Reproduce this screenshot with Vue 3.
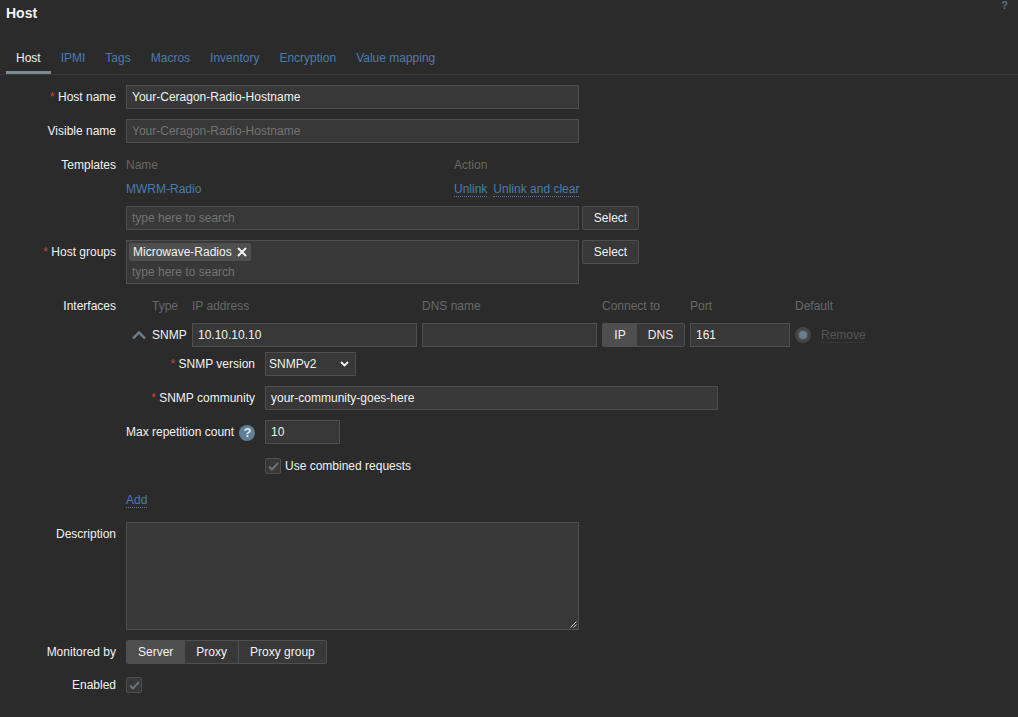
<script setup>
const tabs = ['Host', 'IPMI', 'Tags', 'Macros', 'Inventory', 'Encryption', 'Value mapping']
</script>

<template>
  <div class="page">
    <header class="head">
      <h1>Host</h1>
      <span class="help">?</span>
    </header>

    <nav class="tabs">
      <a v-for="(tab, i) in tabs" :key="tab" class="tab" :class="{ active: i === 0 }">{{ tab }}</a>
    </nav>

    <form class="form" @submit.prevent>
      <div class="row">
        <label class="lbl"><i>*</i> Host name</label>
        <div class="input wide">Your-Ceragon-Radio-Hostname</div>
      </div>

      <div class="row">
        <label class="lbl">Visible name</label>
        <div class="input wide muted">Your-Ceragon-Radio-Hostname</div>
      </div>

      <div class="row">
        <label class="lbl lbl-top">Templates</label>
        <div>
          <div class="tpl-line head-cell">
            <span>Name</span>
            <span>Action</span>
          </div>
          <div class="tpl-line">
            <a class="link">MWRM-Radio</a>
            <span class="actions">
              <a class="link dotted">Unlink</a>
              <a class="link dotted">Unlink and clear</a>
            </span>
          </div>
          <div class="with-btn">
            <div class="input wide muted">type here to search</div>
            <button type="button" class="btn">Select</button>
          </div>
        </div>
      </div>

      <div class="row">
        <label class="lbl"><i>*</i> Host groups</label>
        <div class="with-btn">
          <div class="multi">
            <span class="chip">
              Microwave-Radios
              <svg width="10" height="10" viewBox="0 0 10 10"><path d="M1 1l8 8M9 1l-8 8" stroke="#f2f2f2" stroke-width="2" /></svg>
            </span>
            <span class="multi-hint">type here to search</span>
          </div>
          <button type="button" class="btn">Select</button>
        </div>
      </div>

      <div class="row">
        <label class="lbl lbl-top">Interfaces</label>
        <div>
          <div class="if-grid if-head head-cell">
            <span></span>
            <span>Type</span>
            <span>IP address</span>
            <span>DNS name</span>
            <span>Connect to</span>
            <span>Port</span>
            <span>Default</span>
          </div>
          <div class="if-grid">
            <svg class="chevron" width="16" height="10" viewBox="0 0 16 10"><path d="M2 8.5l6-6 6 6" fill="none" stroke="#6f818c" stroke-width="2.4" /></svg>
            <span>SNMP</span>
            <div class="input">10.10.10.10</div>
            <div class="input"></div>
            <div class="seg seg-if">
              <span class="on">IP</span>
              <span>DNS</span>
            </div>
            <div class="input">161</div>
            <div class="default-cell">
              <span class="radio"></span>
              <span class="remove">Remove</span>
            </div>
          </div>

          <div class="sub">
            <div class="sub-row">
              <label class="lbl"><i>*</i> SNMP version</label>
              <div class="select">
                SNMPv2
                <svg width="9" height="6" viewBox="0 0 9 6"><path d="M1 1l3.5 3.5L8 1" fill="none" stroke="#f2f2f2" stroke-width="1.8" /></svg>
              </div>
            </div>
            <div class="sub-row">
              <label class="lbl"><i>*</i> SNMP community</label>
              <div class="input community">your-community-goes-here</div>
            </div>
            <div class="sub-row">
              <label class="lbl nowrap">Max repetition count <b class="hint">?</b></label>
              <div class="input short">10</div>
            </div>
            <div class="sub-row check-row">
              <span></span>
              <div class="check-wrap">
                <span class="check">
                  <svg width="11" height="9" viewBox="0 0 11 9"><path d="M1 4.5l3 3 6-6.5" fill="none" stroke="#68747c" stroke-width="2" /></svg>
                </span>
                Use combined requests
              </div>
            </div>
          </div>

          <a class="link dotted add">Add</a>
        </div>
      </div>

      <div class="row">
        <label class="lbl">Description</label>
        <div class="input wide area">
          <svg class="grip" width="7" height="7" viewBox="0 0 7 7"><path d="M0.5 6.5l6-6M3.5 6.5l3-3" stroke="#c4c4c4" stroke-width="1" /></svg>
        </div>
      </div>

      <div class="row">
        <label class="lbl">Monitored by</label>
        <div class="seg seg-mon">
          <span class="on">Server</span>
          <span>Proxy</span>
          <span>Proxy group</span>
        </div>
      </div>

      <div class="row">
        <label class="lbl compact">Enabled</label>
        <div class="check-wrap compact">
          <span class="check">
            <svg width="11" height="9" viewBox="0 0 11 9"><path d="M1 4.5l3 3 6-6.5" fill="none" stroke="#68747c" stroke-width="2" /></svg>
          </span>
        </div>
      </div>
    </form>
  </div>
</template>

<style>
html, body {
  margin: 0;
  background: #2b2b2b;
}
</style>

<style scoped>
.page {
  height: 717px;
  overflow: hidden;
  background: #2b2b2b;
  color: #f2f2f2;
  font-family: "Liberation Sans", Arial, sans-serif;
  font-size: 12px;
  box-sizing: border-box;
}

.head {
  display: flex;
  justify-content: space-between;
  height: 40px;
  padding: 5px 10px 0 6px;
}
.head h1 {
  margin: 0;
  font-size: 14px;
  line-height: 16px;
  font-weight: bold;
  color: #f2f2f2;
}
.help {
  font-size: 11px;
  font-weight: bold;
  line-height: 1;
  margin-top: -5px;
  color: #5d6f7b;
}

.tabs {
  display: flex;
  height: 29px;
  padding-left: 6px;
  border-bottom: 1px solid #383838;
}
.tab {
  padding: 0 10px;
  line-height: 27px;
  color: #4b7bae;
}
.tab.active {
  color: #f2f2f2;
  height: 26px;
  border-bottom: 3px solid #768d99;
}

.form {
  padding-top: 10px;
}
.row {
  display: grid;
  grid-template-columns: 116px 1fr;
  column-gap: 10px;
  margin-bottom: 10px;
}

.lbl {
  text-align: right;
  line-height: 24px;
  color: #f2f2f2;
}
.lbl.compact {
  line-height: 22px;
}
.lbl i {
  font-style: normal;
  color: #c9413f;
}
.nowrap {
  white-space: nowrap;
}

.input {
  box-sizing: border-box;
  height: 24px;
  padding: 0 5px;
  line-height: 22px;
  background: #383838;
  border: 1px solid #4f4f4f;
}
.wide {
  width: 453px;
}
.muted {
  color: #737373;
}

.head-cell {
  color: #686868;
}
.tpl-line {
  display: grid;
  grid-template-columns: 328px 1fr;
  height: 24px;
  line-height: 24px;
}
.tpl-line + .with-btn {
  margin-top: 5px;
}
.link {
  color: #4b7bae;
}
.dotted {
  border-bottom: 1px dotted #4b7bae;
}
.actions {
  display: flex;
  gap: 6px;
  align-items: center;
}
.actions .link {
  line-height: 14px;
}

.with-btn {
  display: flex;
  gap: 3px;
  align-items: flex-start;
}
.btn {
  box-sizing: border-box;
  width: 57px;
  height: 24px;
  padding: 0;
  font: inherit;
  color: #f2f2f2;
  background: #383838;
  border: 1px solid #4f4f4f;
  border-radius: 2px;
}

.multi {
  box-sizing: border-box;
  width: 453px;
  height: 44px;
  padding: 2px;
  background: #383838;
  border: 1px solid #4f4f4f;
}
.chip {
  display: flex;
  width: fit-content;
  align-items: center;
  gap: 5px;
  height: 18px;
  padding: 0 4px;
  background: #4f4f4f;
  border-radius: 2px;
}
.multi-hint {
  display: block;
  margin-top: 1px;
  padding-left: 3px;
  line-height: 20px;
  color: #737373;
}

.if-grid {
  display: grid;
  grid-template-columns: 21px 35px 225px 175px 83px 100px auto;
  column-gap: 5px;
  align-items: center;
  height: 24px;
}
.if-head {
  height: 29px;
  align-items: start;
  line-height: 24px;
}
.chevron {
  margin-left: 5px;
}

.default-cell {
  display: flex;
  align-items: center;
  gap: 10px;
}
.radio {
  box-sizing: border-box;
  width: 16px;
  height: 16px;
  border-radius: 50%;
  background: #687f8f;
  border: 3px solid #454545;
  box-shadow: 0 0 0 1px #4f4f4f inset;
}
.remove {
  color: #555;
  line-height: 13px;
  margin-top: 1px;
  border-bottom: 1px dotted #3f3f3f;
}

.seg {
  display: flex;
  box-sizing: border-box;
  height: 24px;
  background: #383838;
  border: 1px solid #4f4f4f;
  border-radius: 2px;
  line-height: 22px;
}
.seg span {
  padding: 0 11px;
  border-left: 1px solid #4f4f4f;
}
.seg span:first-child {
  border-left: 0;
}
.seg .on {
  background: #4f4f4f;
}
.seg-mon {
  width: fit-content;
}
.seg-if span {
  flex: 1;
  padding: 0;
  text-align: center;
  border-left: 0;
}
.seg-if .on {
  flex: 0 0 34px;
}

.sub {
  margin-top: 5px;
}
.sub-row {
  display: grid;
  grid-template-columns: 129px 1fr;
  column-gap: 10px;
  margin-bottom: 10px;
}
.select {
  box-sizing: border-box;
  display: flex;
  justify-content: space-between;
  align-items: center;
  width: 91px;
  height: 24px;
  padding: 0 6px 0 3px;
  background: #383838;
  border: 1px solid #4f4f4f;
}
.community {
  width: 453px;
}
.short {
  width: 75px;
}
.hint {
  display: inline-block;
  width: 16px;
  height: 16px;
  margin-left: 2px;
  border-radius: 50%;
  background: #5f7f96;
  color: #e0e6ea;
  font-size: 13px;
  line-height: 16px;
  text-align: center;
  vertical-align: -1px;
}
.check-row {
  margin-bottom: 0;
}
.check-wrap {
  display: flex;
  align-items: center;
  gap: 4px;
  height: 24px;
}
.check-wrap.compact {
  height: 22px;
}
.check {
  box-sizing: border-box;
  display: flex;
  align-items: center;
  justify-content: center;
  width: 16px;
  height: 16px;
  background: #383838;
  border: 1px solid #4f4f4f;
  border-radius: 2px;
}

.add {
  display: block;
  width: fit-content;
  margin-top: 16px;
  margin-bottom: 4px;
  line-height: 13px;
}

.area {
  position: relative;
  height: 108px;
}
.grip {
  position: absolute;
  right: 1px;
  bottom: 1px;
}
</style>
